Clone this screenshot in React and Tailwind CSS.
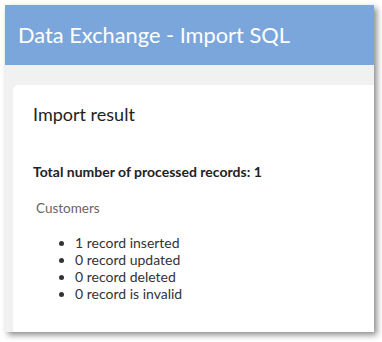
import React from 'react';

const ITEMS = ['1 record inserted', '0 record updated', '0 record deleted', '0 record is invalid'];

export default function App() {
  return (
    <div className="w-[382px] h-[342px] bg-white pt-[5px] pl-[5px]" style={{ fontFamily: 'Lato, "Open Sans", sans-serif' }}>
      <div className="w-[369px] h-[327px] bg-[#f1f1f1] overflow-hidden flex flex-col shadow-[3px_3px_6px_rgba(0,0,0,0.45)]">
        <header className="h-[60px] shrink-0 bg-[#7ba6dc] flex items-center pl-[13px]">
          <h1 className="text-white text-[21.8px] leading-none">Data Exchange - Import SQL</h1>
        </header>
        <div className="flex-1 pl-[8px] pt-[20px]">
          <section className="h-full w-[400px] bg-white rounded-tl-[5px] pl-[20px] pt-[19px]">
            <h2 className="text-[18px] leading-[1.2] text-[#222]">Import result</h2>
            <p className="mt-[38px] text-[14px] leading-[1.2] font-bold text-[#222]">Total number of processed records: 1</p>
            <p className="mt-[20px] ml-[3px] text-[13.5px] leading-[1.2] text-[#666]">Customers</p>
            <ul className="mt-[17px] ml-[22px] text-[14px] leading-[17.3px] text-[#333] list-disc pl-[20px]">
              {ITEMS.map((t) => (
                <li key={t}>{t}</li>
              ))}
            </ul>
          </section>
        </div>
      </div>
    </div>
  );
}
